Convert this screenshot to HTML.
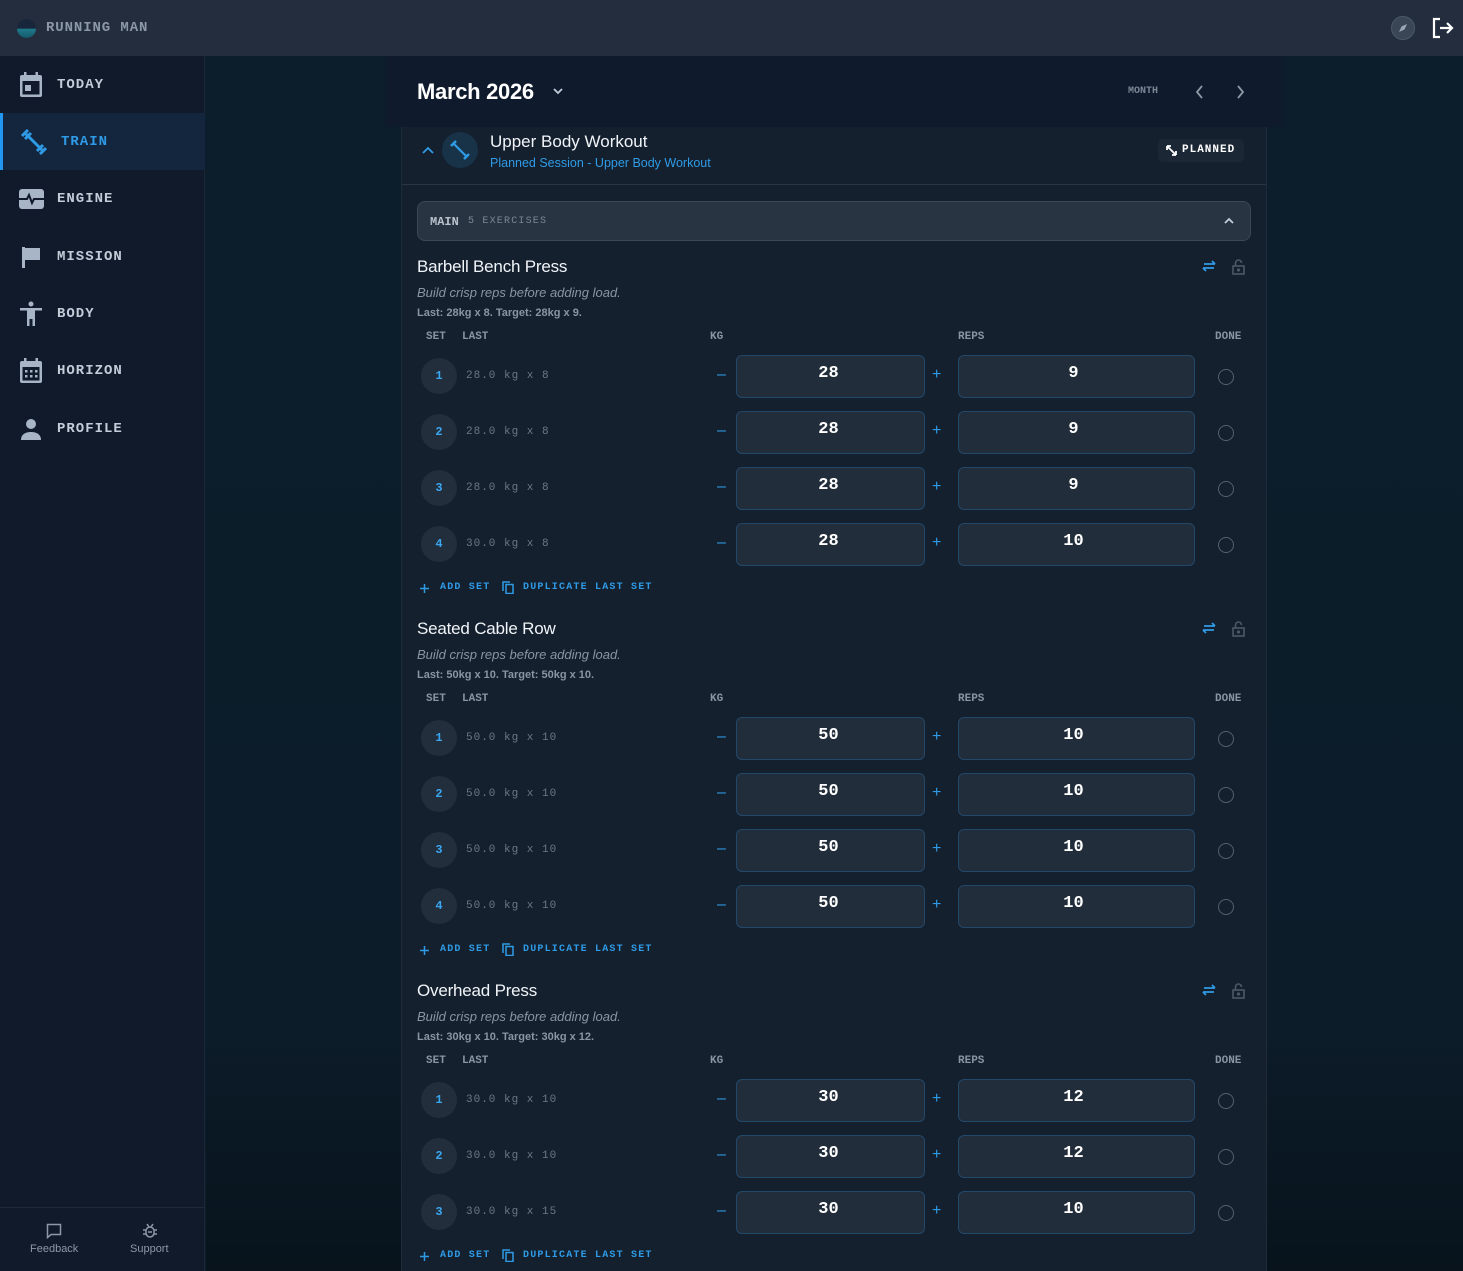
<!DOCTYPE html>
<html><head><meta charset="utf-8"><style>
*{box-sizing:border-box;margin:0;padding:0}
html,body{width:1463px;height:1271px;overflow:hidden}
body{background:#0c1d2b;font-family:"Liberation Sans",sans-serif;position:relative}
.mono{font-family:"Liberation Mono","DejaVu Sans Mono",monospace}
.abs{position:absolute}
#top{left:0;top:0;width:1463px;height:56px;background:#232d3d}
#side{left:0;top:56px;width:205px;height:1215px;background:#101a2a;border-right:1px solid #1b2636}
.nav{position:absolute;left:0;width:205px;height:57px;display:flex;align-items:center;color:#c3ccd8;font-size:14px;letter-spacing:1px;font-weight:bold}
.nav svg{position:absolute;left:19px}
.nav span{position:absolute;left:57px;top:21px}
#main{left:206px;top:56px;width:1257px;height:1215px;background:linear-gradient(180deg,#0c1e2c 0%,#0c1c29 80%,#08131c 100%)}
#hdr{left:385px;top:56px;width:898px;height:71px;background:#0f1b2c}
#card{left:401px;top:127px;width:866px;height:1144px;background:#14202e;border-left:1px solid #1f2b39;border-right:1px solid #1f2b39}
.ex{position:absolute;left:417px;width:834px;height:340px}
.t{position:absolute;left:0;top:0;color:#f1f4f8;font-size:17px;letter-spacing:-0.2px}
.d{position:absolute;left:0;top:28px;color:#8a95a3;font-size:13px;font-style:italic}
.l{position:absolute;left:0;top:50px;color:#8a95a3;font-size:11px;font-weight:bold}
.h{position:absolute;top:74px;color:#8a95a3;font-size:11px;font-weight:bold}
.row{position:absolute;left:0;width:834px;height:43px}
.sc{position:absolute;left:4px;top:3px;width:36px;height:36px;border-radius:50%;background:#222e3b;color:#3aa6f0;font-size:12px;text-align:center;line-height:36px;font-weight:bold}
.lt{position:absolute;left:49px;top:15px;color:#6b7785;font-size:11px;letter-spacing:1px}
.mi{position:absolute;left:300px;top:11px;color:#2f9be6;font-size:16px}
.pl{position:absolute;left:515px;top:11px;color:#2f9be6;font-size:16px}
.bx{position:absolute;top:0;height:43px;background:#212d3a;border:1px solid #22486a;border-radius:6px;color:#fff;font-size:17px;font-weight:bold;text-align:center;line-height:36px}
.kg{left:319px;width:189px;padding-right:4px}.rp{left:541px;width:237px;padding-right:6px}
.dn{position:absolute;left:801px;top:14px;width:16px;height:16px;border-radius:50%;border:1.5px solid #56606c}
.add{position:absolute;left:0;color:#2f9be6;font-size:10px;letter-spacing:1.2px;font-weight:bold;height:14px;width:300px}
.add svg{position:absolute}
.ic{position:absolute;top:2px}
</style></head><body>
<div id="top" class="abs">
 <div class="abs" style="left:17px;top:19px;width:19px;height:19px;border-radius:50%;background:linear-gradient(180deg,#17263a 50%,#1f7a8c 52%,#14596b 100%)"></div>
 <div class="abs mono" style="left:46px;top:20px;color:#8d98a6;font-size:14px;letter-spacing:0.9px;font-weight:bold">RUNNING MAN</div>
 <div class="abs" style="left:1391px;top:16px;width:24px;height:24px;border-radius:50%;background:#3a4556;border:1px solid #4c5768"><svg width="22" height="22" viewBox="0 0 22 22"><path d="M15 7 L12.5 12.5 L7 15 L9.5 9.5Z" fill="#9aa5b3"/></svg></div>
 <svg class="abs" style="left:1431px;top:16px" width="24" height="24" viewBox="0 0 24 24" fill="none" stroke="#fff" stroke-width="2.2"><path d="M9 3H3v18h6M9 12h12M16 7l5 5-5 5"/></svg>
</div>
<div id="side" class="abs">
 <div class="nav mono" style="top:0"><svg width="24" height="26" viewBox="0 0 24 26"><rect x="1" y="3" width="22" height="22" rx="2" fill="#a8b5c6"/><rect x="3.5" y="9" width="17" height="13.5" fill="#101a2a"/><rect x="6" y="13" width="6" height="6" fill="#a8b5c6"/><rect x="5" y="0" width="2.5" height="5" fill="#a8b5c6"/><rect x="16.5" y="0" width="2.5" height="5" fill="#a8b5c6"/></svg><span>TODAY</span></div>
 <div class="nav mono" style="top:57px;background:#13263e;color:#2f9be6"><div class="abs" style="left:0;top:0;width:3px;height:57px;background:#2196f3"></div><svg width="26" height="26" viewBox="0 0 26 26" style="left:21px"><path d="M5 5L21 21" stroke="#2f9be6" stroke-width="3"/><path d="M1 7L7 1M4 10L10 4M16 22L22 16M19 25L25 19" stroke="#2f9be6" stroke-width="3"/></svg><span style="left:61px">TRAIN</span></div>
 <div class="nav mono" style="top:114px"><svg width="26" height="22" viewBox="0 0 26 22"><rect x="0" y="1" width="25" height="20" rx="3" fill="#a8b5c6"/><path d="M0 11H8l2-4 3 8 2-4h10" stroke="#101a2a" stroke-width="2" fill="none"/></svg><span>ENGINE</span></div>
 <div class="nav mono" style="top:172px"><svg width="24" height="24" viewBox="0 0 24 24"><path d="M3 2h3v21H3zM6 3h15v12H6z" fill="#a8b5c6"/></svg><span>MISSION</span></div>
 <div class="nav mono" style="top:229px"><svg width="24" height="26" viewBox="0 0 24 26"><circle cx="12" cy="3" r="2.5" fill="#a8b5c6"/><path d="M1 7h22v2.5h-7V25h-2.5v-7h-3v7H8V9.5H1z" fill="#a8b5c6"/></svg><span>BODY</span></div>
 <div class="nav mono" style="top:286px"><svg width="24" height="26" viewBox="0 0 24 26"><rect x="1" y="3" width="22" height="22" rx="2" fill="#a8b5c6"/><rect x="3.5" y="9" width="17" height="13.5" fill="#101a2a"/><g fill="#a8b5c6"><rect x="6" y="12" width="2.5" height="2.5"/><rect x="11" y="12" width="2.5" height="2.5"/><rect x="16" y="12" width="2.5" height="2.5"/><rect x="6" y="17" width="2.5" height="2.5"/><rect x="11" y="17" width="2.5" height="2.5"/><rect x="16" y="17" width="2.5" height="2.5"/></g><rect x="5" y="0" width="2.5" height="5" fill="#a8b5c6"/><rect x="16.5" y="0" width="2.5" height="5" fill="#a8b5c6"/></svg><span>HORIZON</span></div>
 <div class="nav mono" style="top:344px"><svg width="24" height="24" viewBox="0 0 24 24"><circle cx="12" cy="7" r="5" fill="#a8b5c6"/><path d="M2 23c0-6 5-8 10-8s10 2 10 8z" fill="#a8b5c6"/></svg><span>PROFILE</span></div>
 <div class="abs" style="left:0;top:1151px;width:205px;border-top:1px solid #1e2a3a;height:64px">
  <svg class="abs" style="left:46px;top:15px" width="16" height="16" viewBox="0 0 16 16" fill="none" stroke="#8d98a6" stroke-width="1.5"><path d="M1.5 1.5h13v10H5l-3.5 3z"/></svg>
  <div class="abs" style="left:30px;top:35px;color:#8d98a6;font-size:11px">Feedback</div>
  <svg class="abs" style="left:143px;top:15px" width="14" height="16" viewBox="0 0 14 16" fill="none" stroke="#8d98a6" stroke-width="1.5"><rect x="3" y="4" width="8" height="10" rx="4"/><path d="M0 7h3M11 7h3M0 11h3M11 11h3M4 1l2 3M10 1l-2 3M5 9h4"/></svg>
  <div class="abs" style="left:130px;top:35px;color:#8d98a6;font-size:11px">Support</div>
 </div>
</div>
<div id="main" class="abs"></div>
<div id="hdr" class="abs">
 <div class="abs" style="left:32px;top:23px;color:#fff;font-size:22px;font-weight:bold;letter-spacing:-0.3px">March 2026</div>
 <svg class="abs" style="left:167px;top:30px" width="12" height="10" viewBox="0 0 12 10" fill="none" stroke="#c3ccd8" stroke-width="1.8"><path d="M2 3l4 4 4-4"/></svg>
 <div class="abs mono" style="left:743px;top:30px;color:#7c8796;font-size:10px;font-weight:bold">MONTH</div>
 <svg class="abs" style="left:808px;top:28px" width="14" height="16" viewBox="0 0 14 16" fill="none" stroke="#8d98a6" stroke-width="1.8"><path d="M9 2L4 8l5 6"/></svg>
 <svg class="abs" style="left:848px;top:28px" width="14" height="16" viewBox="0 0 14 16" fill="none" stroke="#8d98a6" stroke-width="1.8"><path d="M5 2l5 6-5 6"/></svg>
</div>
<div id="card" class="abs">
 <svg class="abs" style="left:19px;top:18px" width="14" height="10" viewBox="0 0 14 10" fill="none" stroke="#2f9be6" stroke-width="1.8"><path d="M2 8l5-5 5 5"/></svg>
 <div class="abs" style="left:40px;top:5px;width:36px;height:36px;border-radius:50%;background:#183248"><svg width="36" height="36" viewBox="0 0 36 36"><path d="M12 12l12 12" stroke="#2f9be6" stroke-width="2.2"/><path d="M9 14l5-5M22 27l5-5" stroke="#2f9be6" stroke-width="2.5"/></svg></div>
 <div class="abs" style="left:88px;top:5px;color:#f1f4f8;font-size:17px">Upper Body Workout</div>
 <div class="abs" style="left:88px;top:29px;color:#2f9be6;font-size:12.5px">Planned Session - Upper Body Workout</div>
 <div class="abs mono" style="left:756px;top:12px;width:86px;height:23px;background:#1c2736;border-radius:5px;color:#fff;font-size:11px;font-weight:bold;letter-spacing:1px;line-height:23px;padding-left:24px">PLANNED<svg class="abs" style="left:8px;top:6px" width="11" height="11" viewBox="0 0 11 11"><path d="M1 1l9 9M1 1v4M1 1h4M10 10v-4M10 10h-4" stroke="#fff" stroke-width="1.8" fill="none"/></svg></div>
 <div class="abs" style="left:0;top:57px;width:864px;border-top:1px solid #2a3644"></div>
 <div class="abs" style="left:15px;top:74px;width:834px;height:40px;background:#283441;border:1px solid #3c4754;border-radius:8px">
  <span class="abs mono" style="left:12px;top:13px;color:#b8c1cc;font-size:12px;font-weight:bold">MAIN</span>
  <span class="abs mono" style="left:50px;top:14px;color:#7c8796;font-size:10px;letter-spacing:1.2px">5 EXERCISES</span>
  <svg class="abs" style="left:805px;top:14px" width="12" height="10" viewBox="0 0 12 10" fill="none" stroke="#c3ccd8" stroke-width="1.8"><path d="M2 7l4-4 4 4"/></svg>
 </div>
</div>

<!-- Exercise 1 -->
<div class="ex" style="top:257px">
 <div class="t">Barbell Bench Press</div>
 <svg class="ic" style="left:784px" width="16" height="14" viewBox="0 0 16 14" fill="none" stroke="#2f9be6" stroke-width="1.8"><path d="M3 5h11M11 2l3 3M13 9H2M5 12l-3-3"/></svg>
 <svg class="ic" style="left:815px" width="13" height="16" viewBox="0 0 13 16" fill="none" stroke="#4d5866" stroke-width="1.6"><rect x="1" y="7" width="11" height="8"/><path d="M3.5 7V4a3 3 0 0 1 6 0"/><circle cx="6.5" cy="11" r="0.8" fill="#4d5866"/></svg>
 <div class="d">Build crisp reps before adding load.</div>
 <div class="l">Last: 28kg x 8. Target: 28kg x 9.</div>
 <div class="h mono" style="left:9px">SET</div><div class="h mono" style="left:45px">LAST</div><div class="h mono" style="left:293px">KG</div><div class="h mono" style="left:541px">REPS</div><div class="h mono" style="left:798px">DONE</div>
 <div class="row" style="top:98px"><div class="sc mono">1</div><div class="lt mono">28.0 kg x 8</div><div class="mi">–</div><div class="bx kg mono">28</div><div class="pl">+</div><div class="bx rp mono">9</div><div class="dn"></div></div>
 <div class="row" style="top:154px"><div class="sc mono">2</div><div class="lt mono">28.0 kg x 8</div><div class="mi">–</div><div class="bx kg mono">28</div><div class="pl">+</div><div class="bx rp mono">9</div><div class="dn"></div></div>
 <div class="row" style="top:210px"><div class="sc mono">3</div><div class="lt mono">28.0 kg x 8</div><div class="mi">–</div><div class="bx kg mono">28</div><div class="pl">+</div><div class="bx rp mono">9</div><div class="dn"></div></div>
 <div class="row" style="top:266px"><div class="sc mono">4</div><div class="lt mono">30.0 kg x 8</div><div class="mi">–</div><div class="bx kg mono">28</div><div class="pl">+</div><div class="bx rp mono">10</div><div class="dn"></div></div>
 <div class="add mono" style="top:325px"><svg style="left:3px;top:2px" width="9" height="9" viewBox="0 0 9 9" stroke="#2f9be6" stroke-width="1.5"><path d="M4.5 0v9M0 4.5h9"/></svg><span class="abs" style="left:23px;top:0">ADD SET</span><svg style="left:85px;top:-1px" width="12" height="13" viewBox="0 0 12 13" fill="none" stroke="#2f9be6" stroke-width="1.5"><rect x="4" y="3.5" width="7" height="9"/><path d="M1 10V1h7"/></svg><span class="abs" style="left:106px;top:0">DUPLICATE LAST SET</span></div>
</div>

<!-- Exercise 2 -->
<div class="ex" style="top:619px">
 <div class="t">Seated Cable Row</div>
 <svg class="ic" style="left:784px" width="16" height="14" viewBox="0 0 16 14" fill="none" stroke="#2f9be6" stroke-width="1.8"><path d="M3 5h11M11 2l3 3M13 9H2M5 12l-3-3"/></svg>
 <svg class="ic" style="left:815px" width="13" height="16" viewBox="0 0 13 16" fill="none" stroke="#4d5866" stroke-width="1.6"><rect x="1" y="7" width="11" height="8"/><path d="M3.5 7V4a3 3 0 0 1 6 0"/><circle cx="6.5" cy="11" r="0.8" fill="#4d5866"/></svg>
 <div class="d">Build crisp reps before adding load.</div>
 <div class="l">Last: 50kg x 10. Target: 50kg x 10.</div>
 <div class="h mono" style="left:9px">SET</div><div class="h mono" style="left:45px">LAST</div><div class="h mono" style="left:293px">KG</div><div class="h mono" style="left:541px">REPS</div><div class="h mono" style="left:798px">DONE</div>
 <div class="row" style="top:98px"><div class="sc mono">1</div><div class="lt mono">50.0 kg x 10</div><div class="mi">–</div><div class="bx kg mono">50</div><div class="pl">+</div><div class="bx rp mono">10</div><div class="dn"></div></div>
 <div class="row" style="top:154px"><div class="sc mono">2</div><div class="lt mono">50.0 kg x 10</div><div class="mi">–</div><div class="bx kg mono">50</div><div class="pl">+</div><div class="bx rp mono">10</div><div class="dn"></div></div>
 <div class="row" style="top:210px"><div class="sc mono">3</div><div class="lt mono">50.0 kg x 10</div><div class="mi">–</div><div class="bx kg mono">50</div><div class="pl">+</div><div class="bx rp mono">10</div><div class="dn"></div></div>
 <div class="row" style="top:266px"><div class="sc mono">4</div><div class="lt mono">50.0 kg x 10</div><div class="mi">–</div><div class="bx kg mono">50</div><div class="pl">+</div><div class="bx rp mono">10</div><div class="dn"></div></div>
 <div class="add mono" style="top:325px"><svg style="left:3px;top:2px" width="9" height="9" viewBox="0 0 9 9" stroke="#2f9be6" stroke-width="1.5"><path d="M4.5 0v9M0 4.5h9"/></svg><span class="abs" style="left:23px;top:0">ADD SET</span><svg style="left:85px;top:-1px" width="12" height="13" viewBox="0 0 12 13" fill="none" stroke="#2f9be6" stroke-width="1.5"><rect x="4" y="3.5" width="7" height="9"/><path d="M1 10V1h7"/></svg><span class="abs" style="left:106px;top:0">DUPLICATE LAST SET</span></div>
</div>

<!-- Exercise 3 -->
<div class="ex" style="top:981px">
 <div class="t">Overhead Press</div>
 <svg class="ic" style="left:784px" width="16" height="14" viewBox="0 0 16 14" fill="none" stroke="#2f9be6" stroke-width="1.8"><path d="M3 5h11M11 2l3 3M13 9H2M5 12l-3-3"/></svg>
 <svg class="ic" style="left:815px" width="13" height="16" viewBox="0 0 13 16" fill="none" stroke="#4d5866" stroke-width="1.6"><rect x="1" y="7" width="11" height="8"/><path d="M3.5 7V4a3 3 0 0 1 6 0"/><circle cx="6.5" cy="11" r="0.8" fill="#4d5866"/></svg>
 <div class="d">Build crisp reps before adding load.</div>
 <div class="l">Last: 30kg x 10. Target: 30kg x 12.</div>
 <div class="h mono" style="left:9px">SET</div><div class="h mono" style="left:45px">LAST</div><div class="h mono" style="left:293px">KG</div><div class="h mono" style="left:541px">REPS</div><div class="h mono" style="left:798px">DONE</div>
 <div class="row" style="top:98px"><div class="sc mono">1</div><div class="lt mono">30.0 kg x 10</div><div class="mi">–</div><div class="bx kg mono">30</div><div class="pl">+</div><div class="bx rp mono">12</div><div class="dn"></div></div>
 <div class="row" style="top:154px"><div class="sc mono">2</div><div class="lt mono">30.0 kg x 10</div><div class="mi">–</div><div class="bx kg mono">30</div><div class="pl">+</div><div class="bx rp mono">12</div><div class="dn"></div></div>
 <div class="row" style="top:210px"><div class="sc mono">3</div><div class="lt mono">30.0 kg x 15</div><div class="mi">–</div><div class="bx kg mono">30</div><div class="pl">+</div><div class="bx rp mono">10</div><div class="dn"></div></div>
 <div class="add mono" style="top:269px"><svg style="left:3px;top:2px" width="9" height="9" viewBox="0 0 9 9" stroke="#2f9be6" stroke-width="1.5"><path d="M4.5 0v9M0 4.5h9"/></svg><span class="abs" style="left:23px;top:0">ADD SET</span><svg style="left:85px;top:-1px" width="12" height="13" viewBox="0 0 12 13" fill="none" stroke="#2f9be6" stroke-width="1.5"><rect x="4" y="3.5" width="7" height="9"/><path d="M1 10V1h7"/></svg><span class="abs" style="left:106px;top:0">DUPLICATE LAST SET</span></div>
</div>
</body></html>
